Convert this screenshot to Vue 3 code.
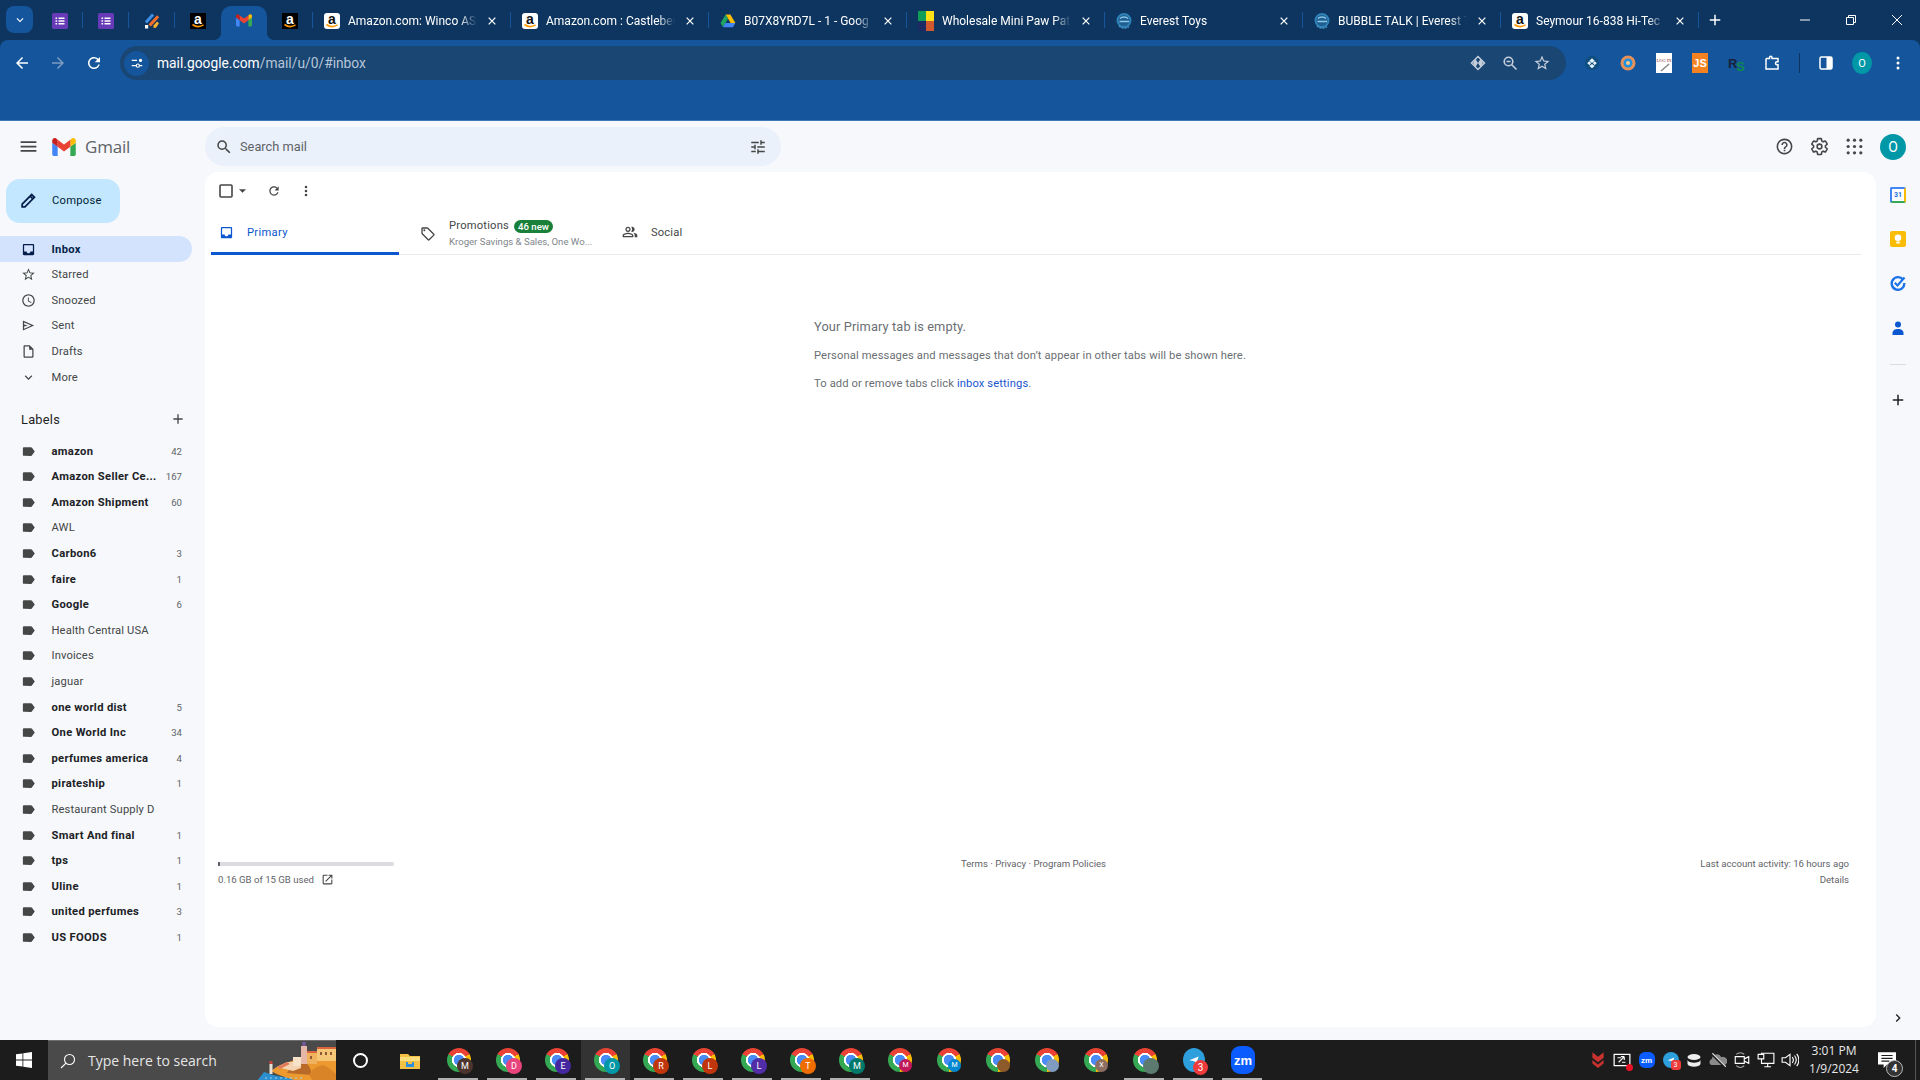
<template>
  <div class="screen">
    <svg class="defs" aria-hidden="true">
      <symbol id="fav-forms" viewBox="0 0 16 16">
        <rect width="16" height="16" rx="1.500" fill="#673ab7" />
        <path d="M6.500 4.500h6v1.400h-6zM6.500 7.300h6v1.400h-6zM6.500 10.100h6v1.400h-6zM3.500 4.500h1.600v1.400H3.500zM3.500 7.300h1.600v1.400H3.500zM3.500 10.100h1.600v1.400H3.500z" fill="#fff" />
      </symbol>
      <symbol id="fav-jot" viewBox="0 0 16 16">
        <path d="M.8 8.500 8 .5l2.200 1.900-7.200 8z" fill="#3f8ee8" />
        <path d="M4.500 11.500 13 2.300l2.200 1.900-8.400 9.300z" fill="#f4702a" />
        <path d="M9.500 12.500 13 8.500l2 1.700-3 4.600-2.500.3z" fill="#f8b12c" />
        <path d="M1 12h3.200v3.500H1z" fill="#fff" />
      </symbol>
      <symbol id="fav-gmail" viewBox="0 0 52 42">
        <path fill="#4285f4" d="M3.600 42H12V21.600L0 12.600v25.800A3.600 3.600 0 0 0 3.600 42z" />
        <path fill="#34a853" d="M40 42h8.400a3.600 3.600 0 0 0 3.600-3.600V12.600l-12 9z" />
        <path fill="#fbbc04" d="M40 6v15.600l12-9V7.800c0-4.450-5.080-7-8.640-4.320z" />
        <path fill="#ea4335" d="M12 21.600V6l14 10.500L40 6v15.600L26 32.100z" />
        <path fill="#c5221f" d="M0 7.800v4.800l12 9V6L8.640 3.480C5.080.8 0 3.350 0 7.800z" />
      </symbol>
      <symbol id="fav-drive" viewBox="0 0 16 16">
        <path d="M5.600 1.500h4.800l5 8.600h-4.800z" fill="#fbbc04" />
        <path d="M5.600 1.500.6 10.100l2.400 4.200 5-8.600z" fill="#1fa463" />
        <path d="M3 14.300h10l2.400-4.200H5.400z" fill="#4285f4" />
      </symbol>
      <symbol id="fav-blocks" viewBox="0 0 16 20">
        <rect width="8" height="10" fill="#0f9d58" />
        <rect x="8" width="8" height="10" fill="#fbe216" />
        <rect y="10" width="8" height="10" fill="#1c2b63" />
        <rect x="8" y="10" width="8" height="10" fill="#d2582d" />
      </symbol>
      <symbol id="fav-everest" viewBox="0 0 16 16">
        <circle cx="8" cy="7.500" r="6.500" fill="#1f5f8f" stroke="#2f82b8" stroke-width="2" />
        <path d="M3.500 8.500h9.500M4 5.500c2-2 6-2 8 0" fill="none" stroke="#8cc6ea" stroke-width="1.500" />
        <path d="M3 13c2 2.500 7 2.800 10 .8" fill="none" stroke="#4f9ccd" stroke-width="1.200" stroke-dasharray="2 1" />
      </symbol>
    </svg>

    <div class="tabstrip">
      <div class="tab-search">
        <svg viewBox="0 0 24 24" class="ic14" fill="#fff"><path d="M7.410 8.590 12 13.170l4.590-4.580L18 10l-6 6-6-6z" /></svg>
      </div>
      <div
        v-for="pin in pinnedTabs"
        :key="pin.id"
        class="pin"
        :class="{ 'pin--active': pin.active, 'has-sep': pin.sep }"
      >
        <div v-if="pin.icon === 'amazon-dark'" class="fav-amz fav-amz--dark">
          <span>a</span>
          <svg viewBox="0 0 16 16" class="fav-amz__smile"><path d="M2.500 11.500c3.500 2.600 7.500 2.600 11 .4" fill="none" stroke="#f90" stroke-width="1.600" /></svg>
        </div>
        <svg v-else class="fav"><use :href="'#' + pin.icon" /></svg>
      </div>
      <div v-for="tab in tabs" :key="tab.title" class="tab has-sep">
        <div v-if="tab.icon === 'amazon'" class="fav-amz">
          <span>a</span>
          <svg viewBox="0 0 16 16" class="fav-amz__smile"><path d="M2.500 11.500c3.500 2.600 7.500 2.600 11 .4" fill="none" stroke="#f90" stroke-width="1.600" /></svg>
        </div>
        <svg v-else class="fav" :class="{ 'fav--tall': tab.icon === 'fav-blocks' }"><use :href="'#' + tab.icon" /></svg>
        <span class="tab-title">{{ tab.title }}</span>
        <svg class="tab-close" viewBox="0 0 12 12"><path d="M2 2l8 8M10 2l-8 8" stroke="#fff" stroke-width="1.500" /></svg>
      </div>
      <div class="tab-new">
        <svg viewBox="0 0 24 24" class="ic18" fill="#fff"><path d="M19 13h-6v6h-2v-6H5v-2h6V5h2v6h6v2z" /></svg>
      </div>
      <div class="win-controls">
        <div class="win-btn"><svg viewBox="0 0 12 12" class="ic12"><path d="M1 6h10" stroke="#fff" /></svg></div>
        <div class="win-btn"><svg viewBox="0 0 12 12" class="ic12"><path d="M1.500 3.500h7v7h-7zM3.500 3.500v-2h7v7h-2" fill="none" stroke="#fff" /></svg></div>
        <div class="win-btn"><svg viewBox="0 0 12 12" class="ic12"><path d="M1 1l10 10M11 1 1 11" stroke="#fff" /></svg></div>
      </div>
    </div>

    <div class="chrome-bar">
      <div class="toolbar">
        <div class="tool-btn"><svg viewBox="0 0 24 24" class="ic18" fill="#fff"><path d="M20 11H7.830l5.590-5.590L12 4l-8 8 8 8 1.410-1.410L7.830 13H20v-2z" /></svg></div>
        <div class="tool-btn"><svg viewBox="0 0 24 24" class="ic18" fill="#7c9cc4"><path d="M12 4l-1.410 1.410L16.170 11H4v2h12.170l-5.580 5.590L12 20l8-8z" /></svg></div>
        <div class="tool-btn"><svg viewBox="0 0 24 24" class="ic18" fill="#fff"><path d="M17.650 6.350A7.958 7.958 0 0 0 12 4c-4.420 0-7.990 3.580-7.990 8s3.570 8 7.990 8c3.730 0 6.840-2.550 7.730-6h-2.080A5.990 5.990 0 0 1 12 18c-3.310 0-6-2.690-6-6s2.690-6 6-6c1.660 0 3.140.690 4.220 1.780L13 11h7V4l-2.350 2.350z" /></svg></div>
        <div class="omnibox">
          <div class="site-info">
            <svg viewBox="0 0 16 16" class="ic14"><path d="M2 5h6M11 11h3M2 11h5" stroke="#fff" stroke-width="1.600" /><circle cx="12" cy="5" r="1.800" fill="#fff" /><circle cx="9" cy="11" r="1.800" fill="none" stroke="#fff" stroke-width="1.300" /></svg>
          </div>
          <span class="url">mail.google.com<span class="url-path">/mail/u/0/#inbox</span></span>
          <div class="omni-actions">
            <svg viewBox="0 0 16 16" class="ic16"><path d="M8 1.500 14.500 8 8 14.500 1.500 8z" fill="none" stroke="#c5cfdb" stroke-width="1.500" /><path d="M5.500 3.900 8 8l-2.500 4.100L3 8zM10.500 3.900 13 8l-2.500 4.100L8 8z" fill="#c5cfdb" /></svg>
            <svg viewBox="0 0 16 16" class="ic16"><circle cx="6.500" cy="6.500" r="4.300" fill="none" stroke="#c5cfdb" stroke-width="1.600" /><path d="M9.800 9.800 14.500 14.500M4.500 6.500h4" stroke="#c5cfdb" stroke-width="1.600" /></svg>
            <svg viewBox="0 0 24 24" class="ic18" fill="#c5cfdb"><path d="M22 9.240l-7.190-.620L12 2 9.190 8.630 2 9.240l5.460 4.730L5.820 21 12 17.270 18.180 21l-1.630-7.030L22 9.240zM12 15.400l-3.760 2.270 1-4.280-3.320-2.880 4.380-.380L12 6.100l1.710 4.040 4.380.380-3.320 2.880 1 4.280L12 15.400z" /></svg>
          </div>
        </div>
        <div class="ext-list">
          <div class="tool-btn"><svg viewBox="0 0 16 16" class="ic14"><circle cx="8" cy="8" r="8" fill="#0e4e7e" /><path d="M8 2.500 11 5.500 8 8 5 5.500zM2.500 8 5 6l2 2-2 2.500zM13.500 8 11 6 9 8l2 2.500zM8 9l3 2.500L8 14l-3-2.500z" fill="#e6f3fb" /></svg></div>
          <div class="tool-btn"><svg viewBox="0 0 16 16" class="ic16"><circle cx="8" cy="8" r="7.500" fill="#e5915a" /><circle cx="8" cy="8" r="4.500" fill="#1e90e0" /><circle cx="8" cy="8" r="2" fill="#f7c98a" /></svg></div>
          <div class="tool-btn"><svg viewBox="0 0 16 20" class="ic-logon"><rect width="16" height="20" fill="#fff" /><text x="8" y="9" text-anchor="middle" font-size="4.500" font-family="Liberation Serif, serif" fill="#8c2a2a">LOG IN</text><path d="M5 18 13 11" stroke="#888" stroke-width="1.500" /></svg></div>
          <div class="tool-btn"><div class="ext-js">JS</div></div>
          <div class="tool-btn"><div class="ext-rs"><span>R</span><span class="ext-rs__s">S</span></div></div>
          <div class="tool-btn"><svg viewBox="0 0 16 16" class="ic16"><path d="M2 3.500h3.500V2.500a1.200 1.200 0 0 1 2.500 0v1H14v3.200h-1a1.500 1.500 0 0 0 0 3h1V14H2v-3.300" fill="none" stroke="#fff" stroke-width="1.500" /><path d="M2 3.500v7.200" stroke="#fff" stroke-width="1.500" /></svg></div>
          <div class="tool-sep"></div>
          <div class="tool-btn"><svg viewBox="0 0 16 16" class="ic16"><rect x="2" y="2" width="12" height="12" rx="1.500" fill="none" stroke="#fff" stroke-width="1.500" /><rect x="8.500" y="2" width="5.500" height="12" fill="#fff" /></svg></div>
          <div class="tool-btn"><div class="profile-sm">O</div></div>
          <div class="tool-btn">
            <svg viewBox="0 0 16 16" class="ic16" fill="#fff"><circle cx="8" cy="3" r="1.500" /><circle cx="8" cy="8" r="1.500" /><circle cx="8" cy="13" r="1.500" /></svg>
          </div>
        </div>
      </div>
      <div class="bookmarks"></div>
    </div>

    <div class="gmail">
      <header class="gm-header">
        <div class="gm-brand">
          <svg viewBox="0 0 24 24" class="gm-burger" fill="#444746"><path d="M3 18h18v-2H3v2zm0-5h18v-2H3v2zm0-7v2h18V6H3z" /></svg>
          <svg class="gm-logo"><use href="#fav-gmail" /></svg>
          <span class="gm-word">Gmail</span>
        </div>
        <div class="gm-search">
          <svg viewBox="0 0 24 24" class="ic18" fill="#444746"><path d="M15.500 14h-.790l-.280-.270A6.471 6.471 0 0 0 16 9.500 6.500 6.500 0 1 0 9.500 16c1.610 0 3.090-.590 4.230-1.570l.270.280v.790l5 4.990L20.490 19l-4.990-5zm-6 0C7.010 14 5 11.990 5 9.500S7.010 5 9.500 5 14 7.010 14 9.500 11.990 14 9.500 14z" /></svg>
          <span class="gm-search__text">Search mail</span>
          <svg viewBox="0 0 24 24" class="gm-tune" fill="#444746"><path d="M3 17v2h6v-2H3zM3 5v2h10V5H3zm10 16v-2h8v-2h-8v-2h-2v6h2zM7 9v2H3v2h4v2h2V9H7zm14 4v-2H11v2h10zm-6-4h2V7h4V5h-4V3h-2v6z" /></svg>
        </div>
        <div class="gm-actions">
          <svg viewBox="0 0 24 24" class="ic19" fill="#444746"><path d="M11 18h2v-2h-2v2zm1-16C6.480 2 2 6.480 2 12s4.480 10 10 10 10-4.480 10-10S17.520 2 12 2zm0 18c-4.410 0-8-3.590-8-8s3.590-8 8-8 8 3.590 8 8-3.590 8-8 8zm0-14c-2.210 0-4 1.790-4 4h2c0-1.100.9-2 2-2s2 .9 2 2c0 2-3 1.750-3 5h2c0-2.250 3-2.500 3-5 0-2.210-1.790-4-4-4z" /></svg>
          <svg viewBox="0 0 24 24" class="ic19" fill="none" stroke="#444746" stroke-width="2"><path d="M19.430 12.980c.04-.32.07-.64.07-.98s-.03-.66-.07-.98l2.110-1.650c.19-.15.24-.42.12-.64l-2-3.460c-.12-.22-.39-.3-.61-.22l-2.490 1c-.52-.4-1.080-.73-1.690-.98l-.38-2.650A.49.49 0 0 0 14 2h-4c-.25 0-.46.18-.49.420l-.38 2.650c-.61.25-1.170.59-1.690.98l-2.490-1c-.23-.08-.49 0-.61.220l-2 3.460c-.13.22-.07.49.12.64l2.110 1.650c-.04.32-.07.65-.07.98s.03.66.07.98l-2.110 1.650c-.19.15-.24.42-.12.64l2 3.460c.12.22.39.3.61.22l2.490-1c.52.4 1.080.73 1.690.98l.38 2.650c.03.24.24.42.49.42h4c.25 0 .46-.18.49-.42l.38-2.650c.61-.25 1.170-.59 1.690-.98l2.490 1c.23.08.49 0 .61-.22l2-3.460c.12-.22.07-.49-.12-.64l-2.110-1.650z" /><circle cx="12" cy="12" r="3" /></svg>
          <svg viewBox="0 0 24 24" class="ic19" fill="#444746"><circle v-for="d in appDots" :key="d.k" :cx="d.x" :cy="d.y" r="2" /></svg>
          <div class="gm-avatar">O</div>
        </div>
      </header>

      <div class="gm-body">
        <aside class="gm-side">
          <div class="compose">
            <svg viewBox="0 0 24 24" class="ic19" fill="none" stroke="#041e49" stroke-width="2.200"><path d="M4 20v-3.500L16 4.500 19.500 8 7.500 20zM14 6.500 17.500 10" /></svg>
            <span>Compose</span>
          </div>
          <nav class="nav">
            <div v-for="item in navItems" :key="item.name" class="nav-row" :class="{ 'nav-row--on': item.on }">
              <svg viewBox="0 0 24 24" class="ic15" :fill="item.on ? '#041e49' : '#444746'"><path :d="item.d" fill-rule="evenodd" /></svg>
              <span>{{ item.name }}</span>
            </div>
          </nav>
          <div class="labels-head">
            <span>Labels</span>
            <svg viewBox="0 0 24 24" class="ic16" fill="#444746"><path d="M19 13h-6v6h-2v-6H5v-2h6V5h2v6h6v2z" /></svg>
          </div>
          <div class="labels">
            <div v-for="label in labels" :key="label.name" class="label-row" :class="{ 'label-row--bold': label.count }">
              <svg viewBox="0 0 24 24" class="ic15" fill="#444746"><path d="M17.630 5.840C17.270 5.330 16.670 5 16 5L5 5.010C3.900 5.010 3 5.900 3 7v10c0 1.100.9 1.990 2 1.990L16 19c.67 0 1.270-.33 1.630-.84L22 12l-4.370-6.160z" /></svg>
              <span class="label-name">{{ label.name }}</span>
              <span class="label-count">{{ label.count }}</span>
            </div>
          </div>
        </aside>

        <main class="card">
          <div class="mail-tools">
            <svg viewBox="0 0 14 14" class="ic-check"><rect x="1" y="1" width="12" height="12" rx="1" fill="none" stroke="#444746" stroke-width="1.600" /></svg>
            <svg viewBox="0 0 8 4" class="ic-caret"><path d="M0 0h8L4 4z" fill="#444746" /></svg>
            <svg viewBox="0 0 24 24" class="ic-refresh" fill="#444746"><path d="M17.650 6.350A7.958 7.958 0 0 0 12 4c-4.420 0-7.990 3.580-7.990 8s3.570 8 7.990 8c3.730 0 6.840-2.550 7.730-6h-2.080A5.990 5.990 0 0 1 12 18c-3.310 0-6-2.690-6-6s2.690-6 6-6c1.660 0 3.140.690 4.220 1.780L13 11h7V4l-2.350 2.350z" /></svg>
            <svg viewBox="0 0 24 24" class="ic-more" fill="#444746"><circle cx="12" cy="5" r="2.200" /><circle cx="12" cy="12" r="2.200" /><circle cx="12" cy="19" r="2.200" /></svg>
          </div>

          <div class="mail-tabs">
            <div class="mail-tab mail-tab--primary">
              <svg viewBox="0 0 24 24" class="ic15" fill="#0b57d0"><path d="M19 3H5c-1.100 0-2 .9-2 2v14c0 1.100.9 2 2 2h14c1.100 0 2-.9 2-2V5c0-1.100-.9-2-2-2zm0 12h-4c0 1.660-1.350 3-3 3s-3-1.340-3-3H5V5h14v10z" /></svg>
              <span>Primary</span>
            </div>
            <div class="mail-tab mail-tab--promo">
              <svg viewBox="0 0 24 24" class="ic16" fill="#444746" fill-rule="evenodd"><path d="M21.410 11.580l-9-9A2 2 0 0 0 11 2H4c-1.100 0-2 .9-2 2v7c0 .55.22 1.050.59 1.420l9 9c.36.36.86.58 1.410.58s1.050-.22 1.410-.59l7-7c.37-.36.59-.86.59-1.410s-.23-1.060-.59-1.420zM13 20.010L4 11V4h7v-.01l9 9-7 7.020z" /><circle cx="6.500" cy="6.500" r="1.500" /></svg>
              <div class="promo-text">
                <div class="promo-title"><span class="promo-name">Promotions</span> <span class="promo-badge">46 new</span></div>
                <div class="promo-sub">Kroger Savings &amp; Sales, One Wo...</div>
              </div>
            </div>
            <div class="mail-tab mail-tab--social">
              <svg viewBox="0 0 24 24" class="ic16" fill="#444746" fill-rule="evenodd"><path d="M16.670 13.130C18.040 14.060 19 15.320 19 17v3h4v-3c0-2.180-3.570-3.470-6.330-3.870zM15 12c2.210 0 4-1.790 4-4s-1.790-4-4-4c-.47 0-.91.1-1.330.24a5.980 5.980 0 0 1 0 7.520c.42.14.86.24 1.330.24zM9 12c2.210 0 4-1.790 4-4s-1.790-4-4-4-4 1.790-4 4 1.790 4 4 4zm0-6c1.100 0 2 .9 2 2s-.9 2-2 2-2-.9-2-2 .9-2 2-2zM9 13c-2.670 0-8 1.340-8 4v3h16v-3c0-2.660-5.330-4-8-4zm6 5H3v-.99C3.200 16.290 6.300 15 9 15s5.800 1.290 6 2v1z" /></svg>
              <span>Social</span>
            </div>
          </div>

          <div class="empty">
            <div class="empty-title">Your Primary tab is empty.</div>
            <p>Personal messages and messages that don’t appear in other tabs will be shown here.</p>
            <p>To add or remove tabs click <a class="empty-link">inbox settings</a>.</p>
          </div>

          <footer class="mail-foot">
            <div class="foot-left">
              <div class="storage-bar"><div class="storage-bar__fill"></div></div>
              <div class="storage-text">
                0.16 GB of 15 GB used
                <svg viewBox="0 0 24 24" class="ic-open" fill="#444746"><path d="M19 19H5V5h7V3H5a2 2 0 0 0-2 2v14a2 2 0 0 0 2 2h14c1.100 0 2-.9 2-2v-7h-2v7zM14 3v2h3.590l-9.830 9.830 1.410 1.410L19 6.410V10h2V3h-7z" /></svg>
              </div>
            </div>
            <div class="foot-mid">Terms · Privacy · Program Policies</div>
            <div class="foot-right">
              <div>Last account activity: 16 hours ago</div>
              <div class="foot-details">Details</div>
            </div>
          </footer>
        </main>

        <aside class="rail">
          <div class="rail-item">
            <div class="app-cal"><span>31</span></div>
          </div>
          <div class="rail-item">
            <svg viewBox="0 0 16 16" class="ic16"><rect width="16" height="16" rx="2" fill="#fbbc04" /><circle cx="8" cy="6.800" r="3.300" fill="#fff" /><rect x="6.300" y="10.500" width="3.400" height="2" fill="#fff" /></svg>
          </div>
          <div class="rail-item">
            <svg viewBox="0 0 16 16" class="ic16"><path d="M13 4.600A6.300 6.300 0 1 0 14.300 8" fill="none" stroke="#1a73e8" stroke-width="2.400" /><path d="M4.800 7.800 7.500 10.500 14.500 2.500" fill="none" stroke="#1a73e8" stroke-width="2.200" /></svg>
          </div>
          <div class="rail-item rail-item--contacts">
            <svg viewBox="0 0 16 16" class="ic16" fill="#0b57d0"><circle cx="8" cy="4.500" r="3" /><path d="M2.500 15v-2c0-2.500 2.500-4 5.500-4s5.500 1.500 5.500 4v2z" /></svg>
          </div>
          <div class="rail-line"></div>
          <svg viewBox="0 0 24 24" class="rail-plus" fill="#202124"><path d="M19 13h-6v6h-2v-6H5v-2h6V5h2v6h6v2z" /></svg>
          <svg viewBox="0 0 24 24" class="rail-chev" fill="#202124"><path d="M8.590 16.590 13.170 12 8.590 7.410 10 6l6 6-6 6z" /></svg>
        </aside>
      </div>
    </div>

    <div class="taskbar">
      <div class="start">
        <svg viewBox="0 0 16 16" class="ic16" fill="#fff"><path d="M0 2.300 6.500 1.400v6.200H0zM7.300 1.300 16 0v7.600H7.300zM0 8.400h6.500v6.200L0 13.700zM7.300 8.400H16V16l-8.700-1.300z" /></svg>
      </div>
      <div class="win-search">
        <svg viewBox="0 0 16 16" class="ic16"><circle cx="9.500" cy="6.500" r="5" fill="none" stroke="#fff" stroke-width="1.100" /><path d="M6 10.200 1 15" stroke="#fff" stroke-width="1.100" /></svg>
        <span>Type here to search</span>
        <svg class="win-art" viewBox="0 0 79 40">
          <path d="M0 40 7 31c8 3 14 4 24 6l48 3z" fill="#2c8fd0" />
          <path d="M14 30c7-6 14-8 24-11l18-3 23 0v24H40c-8-3-18-5-26-10z" fill="#ec9a30" />
          <path d="M30 32c4-7 9-11 16-12 6 3 9 9 8 14z" fill="#b96a28" />
          <path d="M52 34c3-6 8-9 14-10 5 2 9 5 13 9v7H56z" fill="#d98426" />
          <path d="M20 26l10-5h14v6l-8 3z" fill="#f4d4b0" />
          <path d="M20 26l10-5 3 2-10 5z" fill="#e2795a" />
          <rect x="44" y="5" width="6" height="18" fill="#e6b7a6" />
          <rect x="45.500" y="1" width="3" height="4" fill="#7a5aa6" />
          <rect x="36" y="16" width="8" height="9" fill="#f5e2c8" />
          <rect x="50" y="12" width="10" height="11" fill="#f0b25c" />
          <rect x="50" y="10" width="10" height="2" fill="#d9653f" />
          <rect x="60" y="8" width="19" height="12" fill="#f5c777" />
          <rect x="60" y="6" width="19" height="2" fill="#d9653f" />
          <path d="M63 11h2v3h-2zM68 11h2v3h-2zM73 11h2v3h-2zM53 15h2v3h-2z" fill="#8a5a3a" />
          <rect x="12.500" y="23" width="3" height="10" fill="#e8e2d6" />
          <rect x="12.500" y="20" width="3" height="3" fill="#c9463a" />
          <path d="M8 37h40" stroke="#9fd6f2" stroke-width="1" stroke-dasharray="2 3" />
        </svg>
      </div>
      <div class="task-slot">
        <div class="cortana"></div>
      </div>
      <div class="task-slot">
        <svg viewBox="0 0 24 24" class="ic24"><path d="M2 6h8l2 2h10v13H2z" fill="#f4c145" /><path d="M2 9h20v4H2z" fill="#fbdd7c" /><path d="M8 14h8v5H8z" fill="#2f8fd8" /><path d="M10 14h4v2h-4z" fill="#f4c145" /></svg>
      </div>
      <div
        v-for="(item, i) in chromes"
        :key="i"
        class="task-slot"
        :class="{ 'task-slot--open': item.open, 'task-slot--active': item.active }"
      >
        <div class="chrome-ic">
          <div class="chrome-ic__badge" :class="{ 'chrome-ic__badge--small': item.small }" :style="{ background: item.color }">{{ item.letter }}</div>
        </div>
      </div>
      <div class="task-slot task-slot--open">
        <div class="tg">
          <svg viewBox="0 0 24 24" class="tg-plane"><path d="M4 12.500 20 6l-4 12-3.500-3.800z" fill="#fff" /></svg>
          <div class="tg-badge">3</div>
        </div>
      </div>
      <div class="task-slot task-slot--open">
        <div class="zm">zm</div>
      </div>

      <div class="tray">
        <div class="tray-ic"><svg viewBox="0 0 16 16" class="ic18"><path d="M3 1l5 4 5-4v5l-5 4-5-4zM3 8l5 4 5-4v3l-5 4-5-4z" fill="#c8322f" /></svg></div>
        <div class="tray-ic tray-ic--rel">
          <svg viewBox="0 0 16 16" class="ic18"><path d="M1 3h14v10H1z" fill="none" stroke="#fff" stroke-width="1.100" /><path d="M5 10l5-5M10 5H7M10 5v3M4 6h3M11 10H8" stroke="#fff" /></svg>
          <span class="tray-rec"></span>
        </div>
        <div class="tray-ic"><div class="zm zm--small">zm</div></div>
        <div class="tray-ic">
          <div class="tg tg--small">
            <svg viewBox="0 0 24 24" class="tg-plane"><path d="M4 12.500 20 6l-4 12-3.500-3.800z" fill="#fff" /></svg>
            <div class="tg-badge">3</div>
          </div>
        </div>
        <div class="tray-ic"><svg viewBox="0 0 16 16" class="ic16"><ellipse cx="8" cy="5" rx="6.500" ry="3" fill="#eee" /><path d="M1.500 8c1 3.500 12 3.500 13 0v4c-1 3.500-12 3.500-13 0z" fill="#eee" /><path d="M1.500 7.500c2 2.800 11 2.800 13 0" fill="none" stroke="#1c1c1c" /></svg></div>
        <div class="tray-ic"><svg viewBox="0 0 16 16" class="ic18"><path d="M2 12.500a3 3 0 0 1 .5-5.500 4.500 4.500 0 0 1 8.500-1.500 3.800 3.800 0 0 1 3 7z" fill="#8a8a8a" /><path d="M2 2l12 12" stroke="#1c1c1c" stroke-width="2.200" /><path d="M3 2l12 12" stroke="#ddd" stroke-width="1" /></svg></div>
        <div class="tray-ic"><svg viewBox="0 0 16 16" class="ic18"><path d="M2 5h8v6H2zM10 7l4-2v6l-4-2z" fill="none" stroke="#fff" /><path d="M3 3c2-2 5-2 7 0M3 13c2 2 5 2 7 0" fill="none" stroke="#aaa" /></svg></div>
        <div class="tray-ic"><svg viewBox="0 0 16 16" class="ic18"><path d="M4 2h11v9H4zM9.500 11v3M6.500 14h6" fill="none" stroke="#fff" /><path d="M1 3h5v4H1z" fill="#1c1c1c" stroke="#fff" /></svg></div>
        <div class="tray-ic"><svg viewBox="0 0 16 16" class="ic18"><path d="M1 6h3l4-3v10L4 10H1z" fill="none" stroke="#fff" /><path d="M10 5.500a4 4 0 0 1 0 5M12 4a6.500 6.500 0 0 1 0 8M14 2.500a9 9 0 0 1 0 11" fill="none" stroke="#fff" /></svg></div>
        <div class="clock">
          <div>3:01 PM</div>
          <div>1/9/2024</div>
        </div>
        <div class="notif">
          <svg viewBox="0 0 16 16" class="ic18"><path d="M0 1h16v11H8l-3 3v-3H0z" fill="#fff" /><path d="M3 4h10M3 6.500h10M3 9h7" stroke="#1c1c1c" /></svg>
          <span class="notif-badge">4</span>
        </div>
        <div class="show-desk"></div>
      </div>
    </div>
  </div>
</template>

<script setup>
const pinnedTabs = [
  { id: 1, icon: 'fav-forms', sep: true },
  { id: 2, icon: 'fav-forms', sep: true },
  { id: 3, icon: 'fav-jot', sep: true },
  { id: 4, icon: 'amazon-dark' },
  { id: 5, icon: 'fav-gmail', active: true },
  { id: 6, icon: 'amazon-dark', sep: true },
]

const tabs = [
  { title: 'Amazon.com: Winco AS', icon: 'amazon' },
  { title: 'Amazon.com : Castleber', icon: 'amazon' },
  { title: 'B07X8YRD7L - 1 - Goog', icon: 'fav-drive' },
  { title: 'Wholesale Mini Paw Pat', icon: 'fav-blocks' },
  { title: 'Everest Toys', icon: 'fav-everest' },
  { title: 'BUBBLE TALK | Everest T', icon: 'fav-everest' },
  { title: 'Seymour 16-838 Hi-Tec', icon: 'amazon' },
]

const appDots = []
for (const y of [4, 12, 20]) {
  for (const x of [4, 12, 20]) appDots.push({ k: x + '-' + y, x, y })
}

const navItems = [
  { name: 'Inbox', on: true, d: 'M19 3H5c-1.100 0-2 .9-2 2v14c0 1.100.9 2 2 2h14c1.100 0 2-.9 2-2V5c0-1.100-.9-2-2-2zm0 12h-4c0 1.660-1.350 3-3 3s-3-1.340-3-3H5V5h14v10z' },
  { name: 'Starred', d: 'M22 9.240l-7.190-.620L12 2 9.190 8.630 2 9.240l5.460 4.730L5.820 21 12 17.270 18.180 21l-1.630-7.030L22 9.240zM12 15.400l-3.760 2.270 1-4.280-3.320-2.880 4.380-.380L12 6.100l1.710 4.040 4.380.380-3.320 2.880 1 4.280L12 15.400z' },
  { name: 'Snoozed', d: 'M11.990 2C6.470 2 2 6.480 2 12s4.470 10 9.990 10C17.520 22 22 17.520 22 12S17.520 2 11.990 2zM12 20c-4.420 0-8-3.580-8-8s3.580-8 8-8 8 3.580 8 8-3.580 8-8 8zm.5-13H11v6l5.250 3.150.75-1.230-4.500-2.670z' },
  { name: 'Sent', d: 'M3 4v16l18-8zM5 7l11.500 5L5 17v-3.500l6-1.500-6-1.500z' },
  { name: 'Drafts', d: 'M14 2H6c-1.100 0-2 .9-2 2v16c0 1.100.9 2 2 2h12c1.100 0 2-.9 2-2V8l-6-6zm4 18H6V4h7v5h5v11z' },
  { name: 'More', d: 'M7.410 8.590 12 13.170l4.590-4.580L18 10l-6 6-6-6z' },
]

const labels = [
  { name: 'amazon', count: 42 },
  { name: 'Amazon Seller Ce...', count: 167 },
  { name: 'Amazon Shipment', count: 60 },
  { name: 'AWL' },
  { name: 'Carbon6', count: 3 },
  { name: 'faire', count: 1 },
  { name: 'Google', count: 6 },
  { name: 'Health Central USA' },
  { name: 'Invoices' },
  { name: 'jaguar' },
  { name: 'one world dist', count: 5 },
  { name: 'One World Inc', count: 34 },
  { name: 'perfumes america', count: 4 },
  { name: 'pirateship', count: 1 },
  { name: 'Restaurant Supply D' },
  { name: 'Smart And final', count: 1 },
  { name: 'tps', count: 1 },
  { name: 'Uline', count: 1 },
  { name: 'united perfumes', count: 3 },
  { name: 'US FOODS', count: 1 },
]

const chromes = [
  { letter: 'M', color: '#4e342e', open: true },
  { letter: 'D', color: '#e8437d', open: true },
  { letter: 'E', color: '#4527a0', open: true },
  { letter: 'O', color: '#0097a7', open: true, active: true },
  { letter: 'R', color: '#bf360c', open: true },
  { letter: 'L', color: '#bf360c', open: true },
  { letter: 'L', color: '#512da8', open: true },
  { letter: 'T', color: '#ef6c00', open: true },
  { letter: 'M', color: '#00796b', open: true },
  { letter: 'M', color: '#c2185b', small: true },
  { letter: 'M', color: '#0288d1', small: true },
  { letter: '', color: '#8d5a2b', small: true },
  { letter: '', color: '#7f9cc0', small: true },
  { letter: 'X', color: '#8d6e63', small: true },
  { letter: '', color: '#5d7a70', open: true },
]
</script>

<style>
html, body {
  margin: 0;
  overflow: hidden;
  background: #f6f8fc;
}
</style>

<style scoped>
.screen {
  width: 1920px;
  height: 1080px;
  display: flex;
  flex-direction: column;
  overflow: hidden;
  background: #0d355f;
  font-family: Roboto, "Liberation Sans", sans-serif;
  color: #202124;
}

.defs {
  position: absolute;
  width: 0;
  height: 0;
}

.ic12 { width: 12px; height: 12px; }
.ic14 { width: 14px; height: 14px; flex-shrink: 0; }
.ic15 { width: 15px; height: 15px; flex-shrink: 0; }
.ic16 { width: 16px; height: 16px; flex-shrink: 0; }
.ic18 { width: 18px; height: 18px; flex-shrink: 0; }
.ic19 { width: 19px; height: 19px; flex-shrink: 0; }
.ic24 { width: 24px; height: 24px; }

/* browser tabs */
.tabstrip {
  height: 40px;
  display: flex;
  align-items: stretch;
  background: #0d355f;
  padding-left: 6px;
  box-sizing: border-box;
}

.tab-search {
  width: 27px;
  height: 27px;
  margin: 6px 4px 0 0;
  border-radius: 8px;
  background: #15559b;
  display: flex;
  align-items: center;
  justify-content: center;
}

.pin {
  width: 46px;
  position: relative;
  display: flex;
  align-items: center;
  justify-content: center;
  padding-top: 1px;
  box-sizing: border-box;
}

.pin--active {
  margin-top: 6px;
  background: #15559b;
  border-radius: 10px 10px 0 0;
  padding-top: 0;
  padding-bottom: 6px;
}

.pin--active::before,
.pin--active::after {
  content: "";
  position: absolute;
  bottom: 0;
  width: 8px;
  height: 8px;
}

.pin--active::before {
  left: -8px;
  background: radial-gradient(circle at 0 0, transparent 8px, #15559b 8.500px);
}

.pin--active::after {
  right: -8px;
  background: radial-gradient(circle at 100% 0, transparent 8px, #15559b 8.500px);
}

.has-sep::after {
  content: "";
  position: absolute;
  right: 0;
  top: 12px;
  height: 16px;
  width: 1px;
  background: #15559b;
}

.fav {
  width: 16px;
  height: 16px;
  flex-shrink: 0;
}

.fav--tall {
  height: 20px;
}

.fav-amz {
  width: 16px;
  height: 16px;
  flex-shrink: 0;
  position: relative;
  border-radius: 3px;
  background: #fff;
  color: #111;
  font-family: "Liberation Sans", sans-serif;
  font-size: 14px;
  font-weight: 700;
  line-height: 13px;
  text-align: center;
}

.fav-amz--dark {
  border-radius: 0;
  background: #000;
  color: #fff;
}

.fav-amz__smile {
  position: absolute;
  left: 0;
  top: 0;
  width: 16px;
  height: 16px;
}

.tab {
  width: 198px;
  flex-shrink: 0;
  position: relative;
  display: flex;
  align-items: center;
  padding: 1px 0 0 11px;
  box-sizing: border-box;
}

.tab-title {
  width: 133px;
  margin-left: 8px;
  font-size: 12px;
  color: #fff;
  white-space: nowrap;
  -webkit-mask-image: linear-gradient(to right, #000 84%, transparent 97%);
  mask-image: linear-gradient(to right, #000 84%, transparent 97%);
}

.tab-close {
  width: 10px;
  height: 10px;
  margin-left: 6px;
}

.tab-new {
  width: 32px;
  display: flex;
  align-items: center;
  justify-content: center;
}

.win-controls {
  margin-left: auto;
  display: flex;
}

.win-btn {
  width: 46px;
  display: flex;
  align-items: center;
  justify-content: center;
}

/* address bar */
.chrome-bar {
  background: #15559b;
  border-radius: 8px 8px 0 0;
  position: relative;
}

.toolbar {
  height: 40px;
  padding: 0 4px;
  display: flex;
  align-items: center;
  box-sizing: border-box;
}

.tool-btn {
  width: 36px;
  height: 36px;
  flex-shrink: 0;
  display: flex;
  align-items: center;
  justify-content: center;
}

.omnibox {
  width: 1446px;
  height: 34px;
  margin: 6px 8px 0;
  border-radius: 17px;
  background: #1a4674;
  display: flex;
  align-items: center;
  padding-left: 4px;
  box-sizing: border-box;
}

.toolbar > .tool-btn {
  margin-top: 6px;
}

.site-info {
  width: 25px;
  height: 25px;
  border-radius: 50%;
  background: #15559b;
  display: flex;
  align-items: center;
  justify-content: center;
}

.url {
  margin-left: 8px;
  font-size: 13.800px;
  color: #fff;
}

.url-path {
  color: #b7c5d6;
}

.omni-actions {
  margin-left: auto;
  display: flex;
  align-items: center;
  gap: 15.500px;
  padding-right: 15px;
}

.ext-list {
  display: flex;
  align-items: center;
  margin-top: 6px;
}

.ic-logon {
  width: 16px;
  height: 20px;
}

.ext-js {
  width: 16px;
  height: 20px;
  background: #f58220;
  color: #fff;
  font-size: 11px;
  font-weight: 900;
  display: flex;
  align-items: center;
  justify-content: center;
  font-family: "Liberation Sans", sans-serif;
}

.ext-rs {
  font-family: "Liberation Sans", sans-serif;
  font-size: 13px;
  font-weight: 700;
  color: #16233a;
  position: relative;
  letter-spacing: -1px;
}

.ext-rs__s {
  color: #0f8a4f;
  position: relative;
  top: 3px;
}

.tool-sep {
  width: 18px;
  height: 20px;
  position: relative;
  flex-shrink: 0;
}

.tool-sep::after {
  content: "";
  position: absolute;
  left: 9px;
  top: 0;
  height: 20px;
  width: 1px;
  background: #0d355f;
}

.profile-sm {
  width: 20px;
  height: 22px;
  border-radius: 50%;
  background: #0097a7;
  color: #fff;
  font-size: 11px;
  display: flex;
  align-items: center;
  justify-content: center;
}

.bookmarks {
  height: 41px;
  box-sizing: border-box;
  border-bottom: 1px solid #3f78b8;
}

/* gmail */
.gmail {
  height: 919px;
  background: #f6f8fc;
  display: flex;
  flex-direction: column;
}

.gm-header {
  height: 51px;
  flex-shrink: 0;
  display: flex;
  align-items: center;
}

.gm-brand {
  width: 205px;
  display: flex;
  align-items: center;
  flex-shrink: 0;
  padding-left: 18px;
  box-sizing: border-box;
}

.gm-burger {
  width: 21px;
  height: 21px;
}

.gm-logo {
  width: 24px;
  height: 19px;
  margin-left: 13px;
}

.gm-word {
  margin-left: 9px;
  font-family: "Open Sans", sans-serif;
  font-size: 17px;
  color: #5f6368;
  letter-spacing: -.2px;
}

.gm-search {
  width: 576px;
  height: 39px;
  border-radius: 20px;
  background: #eaf1fb;
  display: flex;
  align-items: center;
  padding: 0 10px;
  box-sizing: border-box;
}

.gm-search__text {
  margin-left: 7px;
  font-size: 12.800px;
  color: #5f6368;
}

.gm-tune {
  width: 18px;
  height: 18px;
  margin: 0 4px 0 auto;
}

.gm-actions {
  margin-left: auto;
  display: flex;
  align-items: center;
  gap: 16px;
  padding-right: 14px;
}

.gm-avatar {
  width: 26px;
  height: 26px;
  border-radius: 50%;
  background: #0097a7;
  color: #fff;
  font-size: 14px;
  display: flex;
  align-items: center;
  justify-content: center;
}

.gm-body {
  flex: 1;
  display: flex;
  min-height: 0;
}

.gm-side {
  width: 205px;
  flex-shrink: 0;
  padding-top: 7px;
  box-sizing: border-box;
}

.compose {
  width: 114px;
  height: 44px;
  margin-left: 6px;
  border-radius: 14px;
  background: #c2e7ff;
  display: flex;
  align-items: center;
  gap: 14px;
  padding: 0 0 1px 13px;
  box-sizing: border-box;
  font-size: 11.200px;
  letter-spacing: .25px;
  color: #001d35;
}

.nav {
  margin-top: 13.400px;
}

.nav-row {
  width: 192px;
  height: 25.600px;
  display: flex;
  align-items: center;
  gap: 15.500px;
  padding-left: 21px;
  box-sizing: border-box;
  font-size: 11.200px;
  letter-spacing: .15px;
  color: #444746;
  border-radius: 0 13px 13px 0;
}

.nav-row--on {
  background: #d3e3fd;
  color: #041e49;
  font-weight: 700;
  letter-spacing: .3px;
}

.labels-head {
  margin-top: 14px;
  height: 31px;
  margin-bottom: 3.400px;
  width: 186px;
  display: flex;
  align-items: center;
  justify-content: space-between;
  padding-left: 21px;
  box-sizing: border-box;
  font-size: 12.800px;
  letter-spacing: .25px;
  color: #1f1f1f;
}

.label-row {
  width: 192px;
  height: 25.600px;
  display: flex;
  align-items: center;
  padding: 0 10px 0 21px;
  box-sizing: border-box;
  font-size: 11.200px;
  letter-spacing: .14px;
  color: #444746;
}

.label-row--bold {
  color: #202124;
  font-weight: 700;
  letter-spacing: .33px;
}

.label-name {
  margin-left: 15.500px;
  white-space: nowrap;
}

.label-count {
  margin-left: auto;
  font-size: 9.600px;
  font-weight: 400;
  letter-spacing: 0;
  color: #5f6368;
}

/* main card */
.card {
  width: 1671px;
  height: 855px;
  flex-shrink: 0;
  background: #fff;
  border-radius: 13px;
  padding: 0 15px 0 6px;
  box-sizing: border-box;
  display: flex;
  flex-direction: column;
}

.mail-tools {
  height: 38px;
  flex-shrink: 0;
  display: flex;
  align-items: center;
}

.ic-check {
  width: 14px;
  height: 14px;
  margin-left: 8px;
}

.ic-caret {
  width: 7px;
  height: 4px;
  margin-left: 6px;
}

.ic-refresh {
  width: 14px;
  height: 14px;
  margin-left: 21px;
}

.ic-more {
  width: 14px;
  height: 14px;
  margin-left: 18px;
}

.mail-tabs {
  margin-top: 5px;
  height: 40px;
  flex-shrink: 0;
  display: flex;
  border-bottom: 1px solid #e7e9ec;
  box-sizing: border-box;
}

.mail-tab {
  display: flex;
  align-items: center;
  box-sizing: border-box;
  font-size: 11.200px;
  color: #444746;
  height: 40px;
}

.mail-tab--primary {
  width: 188px;
  padding: 0 0 3px 8px;
  gap: 13px;
  color: #0b57d0;
  letter-spacing: .3px;
  border-bottom: 3px solid #0b57d0;
}

.mail-tab--promo {
  width: 207px;
  padding: 0 0 3px 21px;
  gap: 13px;
}

.mail-tab--social {
  padding: 0 0 6px 16px;
  gap: 13px;
  letter-spacing: .15px;
}

.promo-title {
  display: flex;
  align-items: center;
  gap: 5px;
  line-height: 14px;
}

.promo-name {
  letter-spacing: .2px;
}

.promo-badge {
  height: 13px;
  padding: 0 4px;
  border-radius: 7px;
  background: #188038;
  color: #fff;
  font-size: 9.600px;
  font-weight: 500;
  line-height: 13px;
}

.promo-sub {
  margin-top: 3px;
  font-size: 9.600px;
  line-height: 12px;
  color: #80868b;
  white-space: nowrap;
}

.empty {
  flex: 1;
  padding: 63px 0 0 603px;
  color: #6b6f73;
  font-size: 11.200px;
  letter-spacing: .115px;
}

.empty-title {
  font-size: 12.800px;
  line-height: 17px;
}

.empty p {
  margin: 14px 0 0;
  line-height: 14px;
}

.empty-link {
  color: #1a56cf;
}

.mail-foot {
  height: 170px;
  flex-shrink: 0;
  padding: 0 12px 0 7px;
  box-sizing: border-box;
  display: grid;
  grid-template-columns: 1fr auto 1fr;
  font-size: 9.600px;
  color: #5f6368;
}

.storage-bar {
  width: 176px;
  height: 4px;
  margin-top: 5px;
  border-radius: 2px;
  background: #dadce0;
}

.storage-bar__fill {
  width: 2px;
  height: 4px;
  background: #5f6368;
}

.storage-text {
  margin-top: 6px;
  display: flex;
  align-items: center;
  gap: 7px;
  height: 14px;
}

.ic-open {
  width: 13px;
  height: 13px;
}

.foot-mid {
  line-height: 14px;
}

.foot-right {
  text-align: right;
  line-height: 14px;
}

.foot-details {
  margin-top: 2px;
}

/* side rail */
.rail {
  width: 44px;
  flex-shrink: 0;
  padding: 1px 0 14px;
  box-sizing: border-box;
  display: flex;
  flex-direction: column;
  align-items: center;
}

.rail-item {
  height: 44px;
  display: flex;
  align-items: center;
  justify-content: center;
}

.rail-item--contacts {
  padding-top: 1px;
  box-sizing: border-box;
}

.app-cal {
  width: 16px;
  height: 16px;
  box-sizing: border-box;
  border: 2.500px solid #4285f4;
  border-right-color: #fbbc04;
  border-bottom-color: #34a853;
  border-radius: 2px;
  background: #fff;
  color: #1a73e8;
  font-size: 7px;
  font-weight: 700;
  display: flex;
  align-items: center;
  justify-content: center;
}

.rail-line {
  width: 16px;
  height: 1px;
  margin-top: 15px;
  background: #dadce0;
}

.rail-plus {
  width: 18px;
  height: 18px;
  margin-top: 26px;
}

.rail-chev {
  width: 16px;
  height: 16px;
  margin-top: auto;
}

/* windows taskbar */
.taskbar {
  height: 40px;
  flex-shrink: 0;
  background: #1c1c1c;
  display: flex;
  align-items: stretch;
}

.start {
  width: 48px;
  display: flex;
  align-items: center;
  justify-content: center;
}

.win-search {
  width: 288px;
  position: relative;
  background: #4a4a4a;
  border-top: 1px solid #6e6e6e;
  box-sizing: border-box;
  display: flex;
  align-items: center;
  padding-left: 12px;
  gap: 12px;
  color: #e6e6e6;
  font-family: "Open Sans", sans-serif;
  font-size: 14px;
  overflow: hidden;
}

.win-art {
  position: absolute;
  right: 0;
  top: 0;
  width: 79px;
  height: 40px;
}

.task-slot {
  width: 49px;
  flex-shrink: 0;
  position: relative;
  display: flex;
  align-items: center;
  justify-content: center;
}

.task-slot--open::after {
  content: "";
  position: absolute;
  left: 4px;
  right: 5px;
  bottom: 0;
  height: 2px;
  background: #b0b0b0;
}

.task-slot--active {
  background: #333;
}

.cortana {
  width: 11px;
  height: 11px;
  border-radius: 50%;
  border: 2.500px solid #fff;
}

.chrome-ic {
  width: 24px;
  height: 24px;
  margin-left: 1px;
  border-radius: 50%;
  position: relative;
  background:
    radial-gradient(circle closest-side, #4a8cf7 0 42%, #fff 44% 58%, transparent 60%),
    conic-gradient(#ea4335 0 60deg, #fbbc04 60deg 180deg, #34a853 180deg 300deg, #ea4335 300deg);
}

.chrome-ic__badge {
  position: absolute;
  right: -2px;
  bottom: -2px;
  width: 16px;
  height: 16px;
  border-radius: 50%;
  color: #fff;
  font-size: 9px;
  line-height: 16px;
  text-align: center;
}

.chrome-ic__badge--small {
  width: 13px;
  height: 13px;
  right: 0;
  bottom: 0;
  font-size: 7px;
  line-height: 13px;
}

.tg {
  width: 22px;
  height: 24px;
  margin-left: 1px;
  border-radius: 50%;
  background: #2c9fdc;
  position: relative;
  display: flex;
  align-items: center;
  justify-content: center;
}

.tg-plane {
  width: 14px;
  height: 14px;
}

.tg-badge {
  position: absolute;
  right: -3px;
  bottom: -3px;
  width: 15px;
  height: 15px;
  border-radius: 50%;
  background: #ee3b3b;
  color: #fff;
  font-size: 10px;
  line-height: 15px;
  text-align: center;
}

.tg--small {
  width: 16px;
  height: 16px;
}

.tg--small .tg-plane {
  width: 10px;
  height: 10px;
}

.tg--small .tg-badge {
  width: 10px;
  height: 10px;
  right: -2px;
  bottom: -2px;
  font-size: 7px;
  line-height: 10px;
  border-radius: 3px;
}

.zm {
  width: 24px;
  height: 28px;
  margin-left: 1px;
  border-radius: 9px;
  background: #0b5cff;
  color: #fff;
  font-family: "Liberation Sans", sans-serif;
  font-size: 13px;
  font-weight: 700;
  display: flex;
  align-items: center;
  justify-content: center;
}

.zm--small {
  width: 16px;
  height: 16px;
  border-radius: 6px;
  font-size: 8px;
}

.tray {
  margin-left: auto;
  display: flex;
  align-items: center;
}

.tray-ic {
  width: 24px;
  height: 40px;
  display: flex;
  align-items: center;
  justify-content: center;
  position: relative;
}

.tray-rec {
  position: absolute;
  right: 1px;
  bottom: 9px;
  width: 7px;
  height: 7px;
  border-radius: 50%;
  background: #e81123;
}

.clock {
  width: 64px;
  text-align: center;
  color: #e8e8e8;
  font-family: "Open Sans", sans-serif;
  font-size: 12px;
  line-height: 18px;
}

.notif {
  width: 46px;
  margin-left: 3px;
  height: 40px;
  padding-right: 10px;
  box-sizing: border-box;
  position: relative;
  display: flex;
  align-items: center;
  justify-content: center;
}

.notif-badge {
  position: absolute;
  left: 17px;
  top: 20px;
  width: 15px;
  height: 15px;
  border-radius: 50%;
  border: 1px solid #bbb;
  background: #333;
  color: #fff;
  font-size: 10px;
  font-weight: 700;
  line-height: 15px;
  text-align: center;
}

.show-desk {
  width: 5px;
  height: 40px;
  border-left: 1px solid #555;
  box-sizing: border-box;
}
</style>
